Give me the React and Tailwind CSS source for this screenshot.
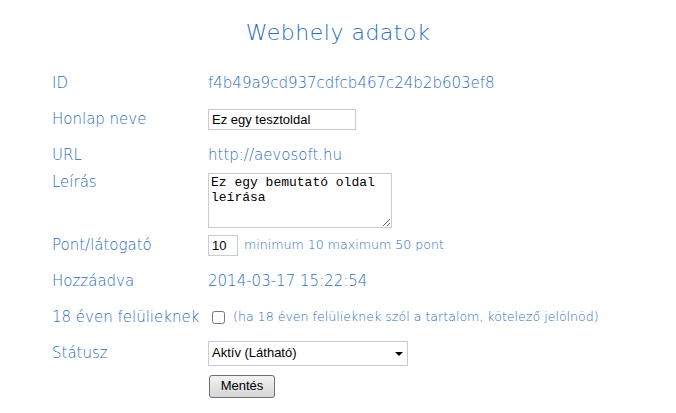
export default function App() {
  return (
    <div className="w-[676px] h-[413px] bg-white text-[#2a6cc0] font-['DejaVu_Sans',sans-serif] font-extralight">
      <div className="h-[65px] flex items-center justify-center">
        <h1 className="text-[22px] tracking-[0.5px]">Webhely adatok</h1>
      </div>

      <div className="pl-[52px]">
        <div className="flex items-center h-[36px]">
          <div className="w-[156px] shrink-0 text-[15px]">ID</div>
          <div className="text-[15px]">f4b49a9cd937cdfcb467c24b2b603ef8</div>
        </div>

        <div className="flex items-center h-[36px]">
          <div className="w-[156px] shrink-0 text-[15px]">Honlap neve</div>
          <input
            className="w-[148px] h-[21px] border border-[#c8ccd2] px-[3px] text-[13px] text-black font-['Liberation_Sans',sans-serif] font-normal outline-none"
            defaultValue="Ez egy tesztoldal"
          />
        </div>

        <div className="flex items-center h-[36px]">
          <div className="w-[156px] shrink-0 text-[15px]">URL</div>
          <div className="text-[15px]">http://aevosoft.hu</div>
        </div>

        <div className="flex items-start h-[54px]">
          <div className="w-[156px] shrink-0 text-[15px] leading-[18px]">Leírás</div>
          <textarea
            className="w-[184px] h-[55px] border border-[#c8ccd2] px-[2px] py-[1px] text-[13px] leading-[15px] text-black font-['Liberation_Mono',monospace] font-normal outline-none resize"
            defaultValue={"Ez egy bemutató oldal leírása"}
          />
        </div>

        <div className="flex items-center h-[36px]">
          <div className="w-[156px] shrink-0 text-[15px]">Pont/látogató</div>
          <input
            className="w-[30px] h-[21px] border border-[#c8ccd2] px-[3px] text-[13px] text-black font-['Liberation_Sans',sans-serif] font-normal outline-none"
            defaultValue="10"
          />
          <span className="ml-[6px] text-[12.6px]">minimum 10 maximum 50 pont</span>
        </div>

        <div className="flex items-center h-[36px]">
          <div className="w-[156px] shrink-0 text-[15px]">Hozzáadva</div>
          <div className="text-[15px]">2014-03-17 15:22:54</div>
        </div>

        <div className="flex items-center h-[36px]">
          <div className="w-[156px] shrink-0 text-[15px] whitespace-nowrap">18 éven felülieknek</div>
          <input type="checkbox" className="ml-[4px] w-[13px] h-[13px] m-0" />
          <span className="ml-[8px] text-[12.6px] whitespace-nowrap">(ha 18 éven felülieknek szól a tartalom, kötelező jelölnöd)</span>
        </div>

        <div className="flex items-center h-[36px]">
          <div className="w-[156px] shrink-0 text-[15px]">Státusz</div>
          <div className="relative w-[200px] h-[25px] border border-[#c8ccd2] bg-white flex items-center pl-[3px] text-[13px] text-black font-['Liberation_Sans',sans-serif] font-normal">
            Aktív (Látható)
            <span className="absolute right-[4px] top-[10px] w-0 h-0 border-l-[4px] border-r-[4px] border-t-[4px] border-l-transparent border-r-transparent border-t-black" />
          </div>
        </div>

        <div className="flex items-center h-[30px]">
          <div className="w-[157px] shrink-0" />
          <button className="w-[66px] h-[23px] border border-[#707070] rounded-[3px] bg-gradient-to-b from-[#f2f2f2] to-[#d6d6d6] text-[13px] text-black font-['Liberation_Sans',sans-serif] font-normal">
            Mentés
          </button>
        </div>
      </div>
    </div>
  );
}
